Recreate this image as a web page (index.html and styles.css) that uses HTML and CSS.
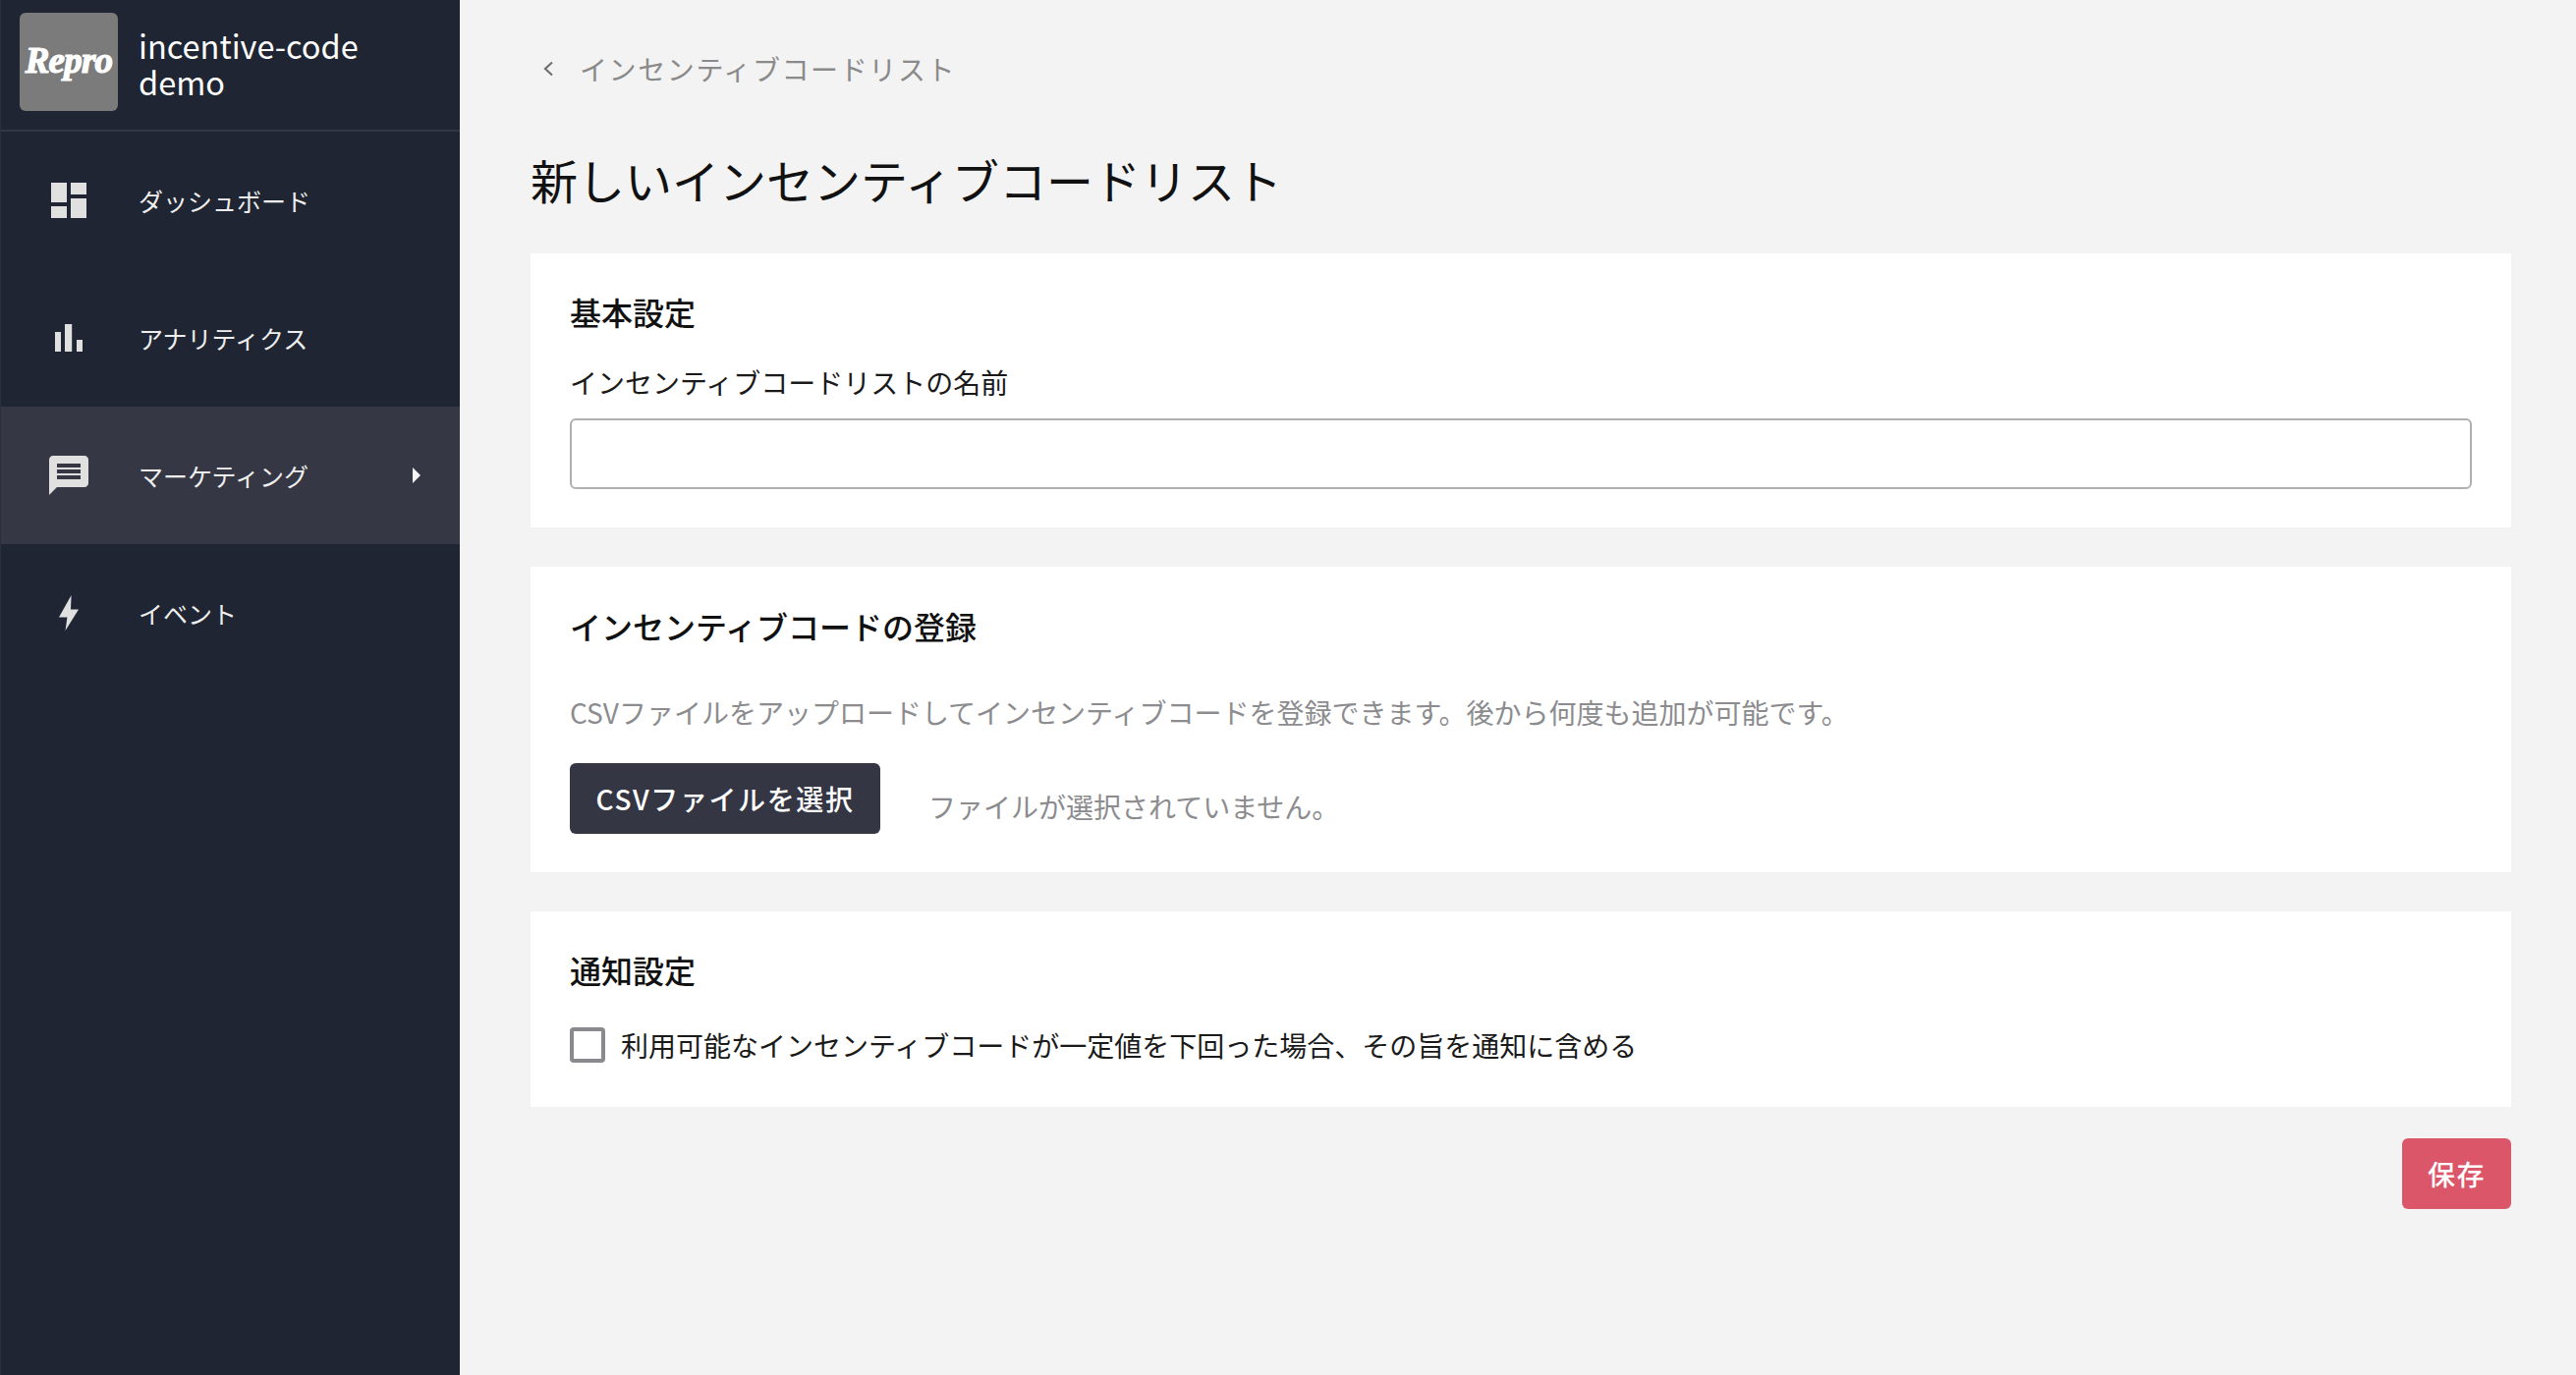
FILE: index.html
```html
<!DOCTYPE html>
<html lang="ja">
<head>
<meta charset="utf-8">
<title>新しいインセンティブコードリスト</title>
<link rel="stylesheet" href="styles.css">
</head>
<body>
<div class="app">
  <aside class="sidebar">
    <header class="brand">
      <div class="logo">Repro</div>
      <div class="brand-name">incentive-code demo</div>
    </header>
    <nav class="nav">
      <a class="nav-item">
        <span class="nav-icon"><svg viewBox="0 0 24 24" width="48" height="48"><path d="M3 13h8V3H3v10zm0 8h8v-6H3v6zm10 0h8V11h-8v10zm0-18v6h8V3h-8z"/></svg></span>
        <span class="nav-label">ダッシュボード</span>
      </a>
      <a class="nav-item">
        <span class="nav-icon"><svg viewBox="0 0 24 24" width="48" height="48"><path d="M5 9h3v10H5zM10 5h3.6v14H10zm6 8h3v6h-3z"/></svg></span>
        <span class="nav-label">アナリティクス</span>
      </a>
      <a class="nav-item active">
        <span class="nav-icon"><svg viewBox="0 0 24 24" width="48" height="48"><path d="M20 2H4c-1.1 0-2 .9-2 2v18l4-4h14c1.1 0 2-.9 2-2V4c0-1.1-.9-2-2-2zM6 14v-2h12v2H6zm0-3V9h12v2H6zm0-3V6h12v2H6z" fill-rule="evenodd"/></svg></span>
        <span class="nav-label">マーケティング</span>
        <svg class="nav-caret" viewBox="0 0 8 16" width="8" height="16"><path d="M0 0l8 8-8 8z"/></svg>
      </a>
      <a class="nav-item">
        <span class="nav-icon"><svg viewBox="0 0 24 24" width="48" height="48"><path d="M13.3 3L7 14.2h4.2L10.3 21 17 10.3h-4z"/></svg></span>
        <span class="nav-label">イベント</span>
      </a>
    </nav>
  </aside>
  <main class="main">
    <a class="back">
      <svg class="back-icon" viewBox="0 0 12 16" width="12" height="16"><path d="M10 1.5L3 8l7 6.5" fill="none" stroke-width="2.2"/></svg>
      <span>インセンティブコードリスト</span>
    </a>
    <h1 class="title">新しいインセンティブコードリスト</h1>

    <section class="card card-basic">
      <h2 class="card-title">基本設定</h2>
      <label class="field-label" for="name">インセンティブコードリストの名前</label>
      <input class="text-input" id="name" type="text">
    </section>

    <section class="card card-upload">
      <h2 class="card-title">インセンティブコードの登録</h2>
      <p class="help">CSVファイルをアップロードしてインセンティブコードを登録できます。後から何度も追加が可能です。</p>
      <div class="file-row">
        <button class="btn btn-dark" type="button">CSVファイルを選択</button>
        <span class="file-status">ファイルが選択されていません。</span>
      </div>
    </section>

    <section class="card card-notify">
      <h2 class="card-title">通知設定</h2>
      <label class="check-row">
        <span class="checkbox"></span>
        <span>利用可能なインセンティブコードが一定値を下回った場合、その旨を通知に含める</span>
      </label>
    </section>

    <div class="actions">
      <button class="btn btn-save" type="button">保存</button>
    </div>
  </main>
</div>
</body>
</html>
```
FILE: styles.css
```css
* { box-sizing: border-box; }
html, body { margin: 0; height: 100%; }
body {
  font-family: "Noto Sans CJK JP", "Noto Sans", sans-serif;
  background: #f3f3f3;
  color: #1a1a1a;
}
.app { display: flex; height: 1400px; overflow: hidden; }

.sidebar {
  flex: 0 0 468px;
  background: #1f2532;
  border-left: 1px solid #2b303b;
  color: #f5f5f5;
}
.brand {
  display: flex;
  align-items: center;
  gap: 21px;
  height: 134px;
  padding: 0 19px 6px;
  border-bottom: 2px solid #343642;
}
.logo {
  flex: 0 0 100px;
  height: 100px;
  padding-bottom: 4px;
  display: flex;
  align-items: center;
  justify-content: center;
  background: #7b7b7b;
  border-radius: 6px;
  color: #fff;
  font-family: "Liberation Serif", serif;
  font-style: italic;
  font-weight: 700;
  font-size: 37px;
  letter-spacing: -0.8px;
  -webkit-text-stroke: 1.2px #fff;
}
.brand-name {
  width: 260px;
  margin-top: 1px;
  font-size: 32.5px;
  line-height: 37px;
  color: #fff;
}
.nav-item {
  display: flex;
  align-items: center;
  height: 140px;
  padding: 0 40px 0 45px;
}
.nav-item.active { background: #363744; }
.nav-icon { width: 48px; height: 48px; margin-right: 47px; fill: #e0e0e0; }
.nav-icon svg { display: block; }
.nav-label { font-size: 25px; color: #eeeeee; line-height: 38px; }
.nav-caret { margin-left: auto; fill: #f5f5f5; }

.main {
  flex: 1;
  padding: 0 66px 0 72px;
}
.back {
  display: flex;
  align-items: center;
  height: 140px;
  color: #8a8a8a;
  font-size: 28px;
  letter-spacing: 1.6px;
}
.back-icon { margin: 0 26px 0 12px; stroke: #707070; }
.title {
  margin: 0;
  height: 118px;
  font-size: 48px;
  font-weight: 400;
  line-height: 85px;
  color: #111;
}
.card {
  background: #fff;
  padding: 0 40px;
  margin-bottom: 40px;
}
.card-basic { height: 279px; padding-top: 39px; }
.card-upload { height: 311px; padding-top: 40px; }
.card-notify { height: 199px; padding-top: 39px; margin-bottom: 32px; }
.card-title {
  margin: 0;
  font-size: 32px;
  font-weight: 500;
  line-height: 40px;
  color: #111;
}
.field-label {
  display: block;
  margin-top: 32px;
  font-size: 28px;
  line-height: 40px;
  color: #1a1a1a;
}
.text-input {
  display: block;
  width: 100%;
  height: 72px;
  margin-top: 17px;
  background: #fff;
  border: 2px solid #b0b0b3;
  border-radius: 6px;
  outline: none;
}
.help {
  margin: 48px 0 0;
  font-size: 28px;
  line-height: 40px;
  color: #8c8c8f;
}
.file-row {
  display: flex;
  align-items: center;
  margin-top: 32px;
}
.btn {
  border: 0;
  border-radius: 6px;
  height: 72px;
  color: #fff;
  font-family: inherit;
  font-size: 28px;
  font-weight: 500;
}
.btn-dark { width: 316px; background: #353644; letter-spacing: 1.6px; padding: 0; }
.file-status {
  margin: 16px 0 0 49px;
  font-size: 28px;
  color: #8c8c8f;
}
.check-row {
  display: flex;
  align-items: center;
  gap: 16px;
  margin-top: 37px;
  font-size: 28px;
  line-height: 40px;
  color: #1a1a1a;
}
.checkbox {
  flex: 0 0 36px;
  height: 36px;
  border: 4px solid #8a8a8e;
  border-radius: 4px;
  background: #fff;
}
.actions { display: flex; justify-content: flex-end; }
.btn-save { width: 111px; background: #da5668; letter-spacing: 1.4px; padding: 0; }
```
